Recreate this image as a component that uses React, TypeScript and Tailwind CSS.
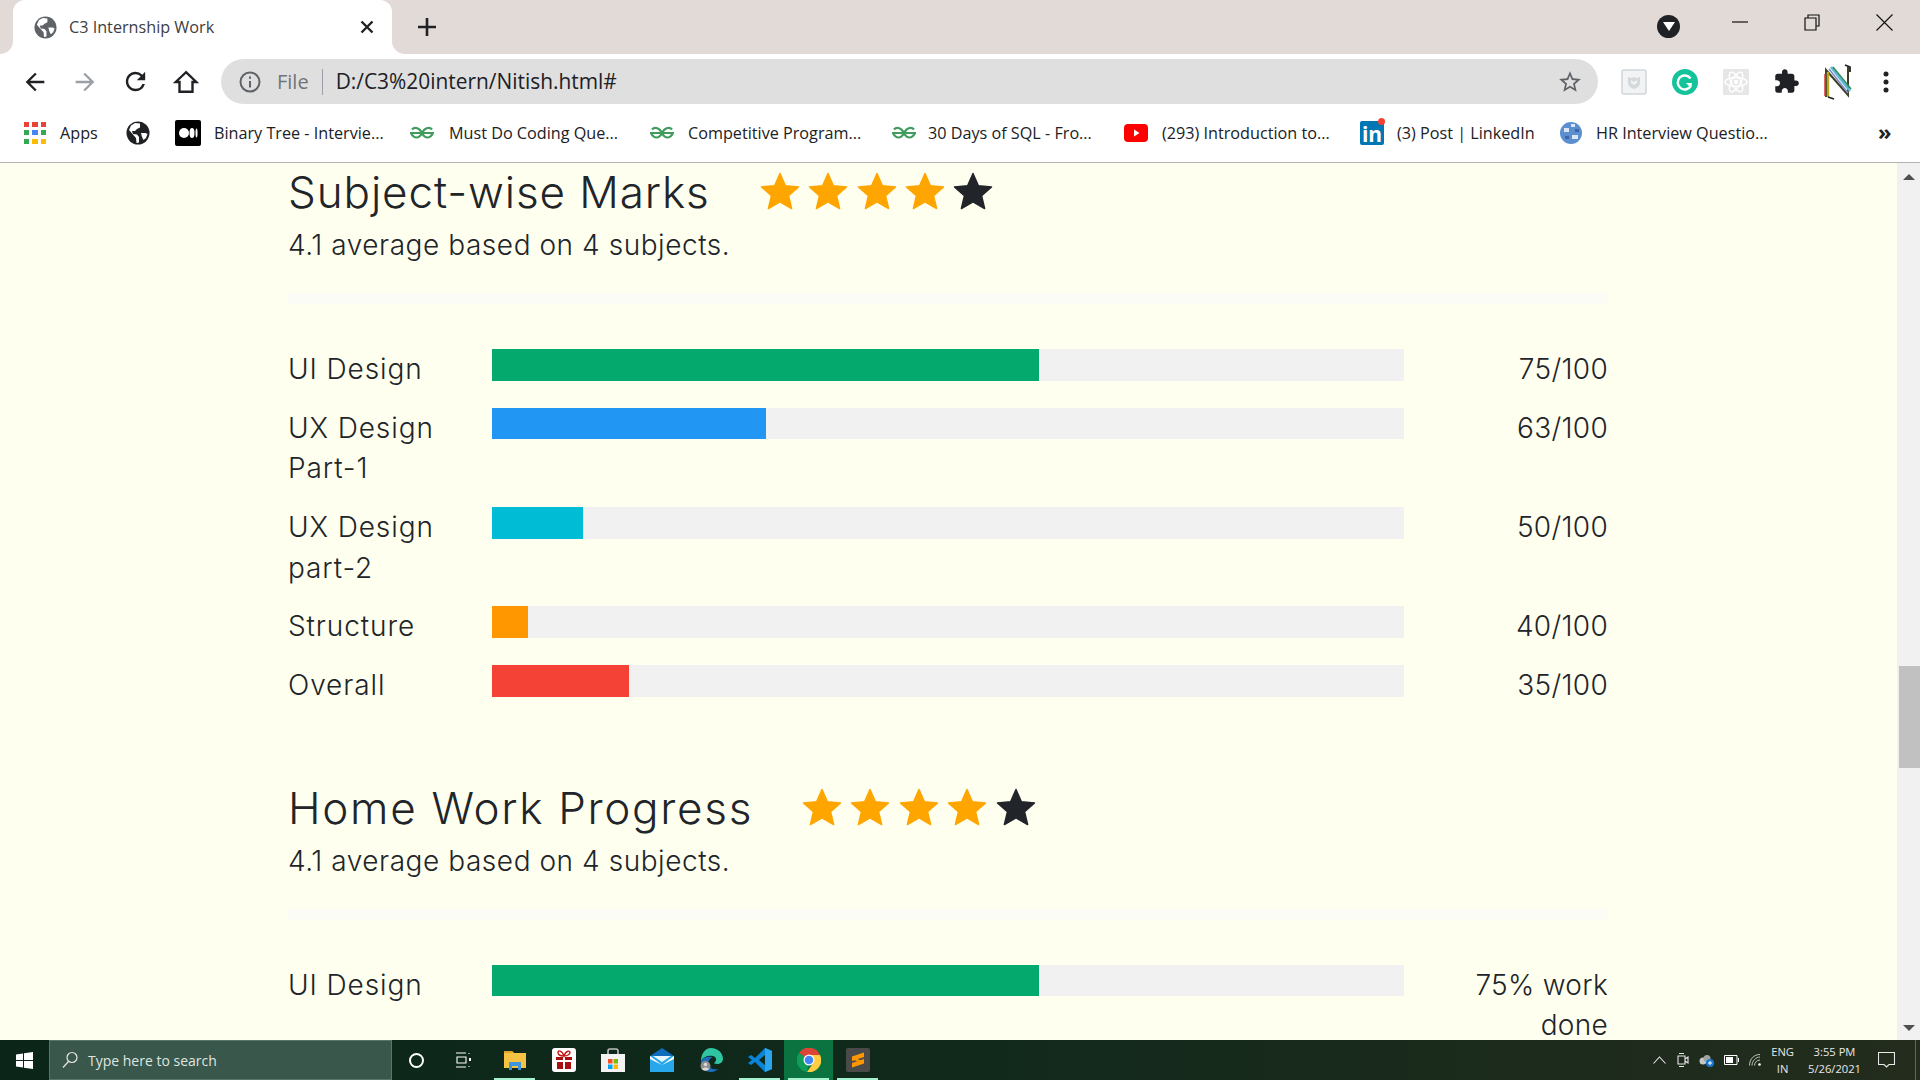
const uiFont = { fontFamily: '"Open Sans", sans-serif' };

type Row = { label: string; color: string; width: string; value: string };

const marks: Row[] = [
  { label: 'UI Design', color: 'bg-[#04aa6d]', width: 'w-[60%]', value: '75/100' },
  { label: 'UX Design Part-1', color: 'bg-[#2196f3]', width: 'w-[30%]', value: '63/100' },
  { label: 'UX Design part-2', color: 'bg-[#00bcd4]', width: 'w-[10%]', value: '50/100' },
  { label: 'Structure', color: 'bg-[#ff9800]', width: 'w-[4%]', value: '40/100' },
  { label: 'Overall', color: 'bg-[#f44336]', width: 'w-[15%]', value: '35/100' },
];

const homework: Row[] = [{ label: 'UI Design', color: 'bg-[#04aa6d]', width: 'w-[60%]', value: '75% work done' }];

const Globe = ({ size, color = '#202124' }: { size: number; color?: string }) => (
  <svg width={size} height={size} viewBox="0 0 24 24">
    <circle cx="12" cy="12" r="11.5" fill={color} />
    <path
      d="M5 4.5 3 9l7 8 .5 5 2.5-.5V16l-2-2.5-4-.5-1-3h3l2-2 3-1.5V2.5L9 2zM15 12h4.5l2 1-1.5 4-2.5 2-1.5-3z"
      fill="#fff"
    />
  </svg>
);

const Gfg = () => (
  <svg width="24" height="14" viewBox="0 0 24 14" fill="none" stroke="#3f9b5e" strokeWidth="2.2">
    <path d="M22 3.5C20 1 15 .8 12 7c3 6 8 6 11 0H1c3 6 8 6 11 0C9 .8 4 1 2 3.5" />
  </svg>
);

const Bookmark = ({ width, icon, text }: { width: string; icon: React.ReactNode; text: string }) => (
  <div className={`flex items-center shrink-0 ${width}`}>
    {icon}
    <span className="text-[16.2px] text-[#202124] whitespace-nowrap">{text}</span>
  </div>
);

const TabStrip = () => (
  <div className="flex h-[54px] shrink-0 bg-[#e2dad7] pl-[13px]" style={uiFont}>
    <div className="relative flex items-center w-[379px] bg-white rounded-t-[12px] pl-[21px]">
      <div className="absolute -left-[13px] bottom-0 w-[13px] h-[13px] bg-white">
        <div className="w-full h-full bg-[#e2dad7] rounded-br-[13px]" />
      </div>
      <div className="absolute -right-[13px] bottom-0 w-[13px] h-[13px] bg-white">
        <div className="w-full h-full bg-[#e2dad7] rounded-bl-[13px]" />
      </div>
      <Globe size={23} color="#5f6368" />
      <span className="ml-[12px] text-[16.2px] text-[#3c4043]">C3 Internship Work</span>
      <svg className="ml-auto mr-[18px]" width="14" height="14" viewBox="0 0 14 14" stroke="#202124" strokeWidth="2.4">
        <path d="M1.5 1.5l11 11M12.5 1.5l-11 11" />
      </svg>
    </div>
    <svg className="ml-[25px] self-center" width="20" height="20" viewBox="0 0 20 20" stroke="#202124" strokeWidth="2.6">
      <path d="M10 1v18M1 10h18" />
    </svg>
    <div className="ml-auto flex items-start">
      <div className="mt-[15px] mr-[52px] flex items-center justify-center w-[23px] h-[23px] rounded-full bg-[#202124]">
        <div className="w-0 h-0 border-l-[6px] border-r-[6px] border-t-[9px] border-l-transparent border-r-transparent border-t-white" />
      </div>
      <svg className="mt-[21px] mr-[56px]" width="16" height="2" viewBox="0 0 16 2">
        <path d="M0 1h16" stroke="#111" strokeWidth="1.2" />
      </svg>
      <svg className="mt-[14px] mr-[56px]" width="16" height="17" viewBox="0 0 16 17" fill="none" stroke="#111" strokeWidth="1.2">
        <path d="M4 4V1h11v11h-3M1 4h11v12H1z" />
      </svg>
      <svg className="mt-[14px] mr-[27px]" width="17" height="17" viewBox="0 0 17 17" stroke="#111" strokeWidth="1.1">
        <path d="M.5.5l16 16M16.5.5l-16 16" />
      </svg>
    </div>
  </div>
);

const ToolbarButton = ({ children }: { children: React.ReactNode }) => (
  <div className="flex items-center justify-center w-[50px] h-full shrink-0">{children}</div>
);

const ExtSlot = ({ children }: { children: React.ReactNode }) => (
  <div className="flex items-center justify-center w-[51px] h-full shrink-0">{children}</div>
);

const Toolbar = () => (
  <div className="flex h-[55px] shrink-0 bg-white pl-[10px] items-center" style={uiFont}>
    <ToolbarButton>
      <svg width="28" height="28" viewBox="0 0 24 24" fill="#202124">
        <path d="M20 11H7.83l5.59-5.59L12 4l-8 8 8 8 1.41-1.41L7.83 13H20v-2z" />
      </svg>
    </ToolbarButton>
    <ToolbarButton>
      <svg width="28" height="28" viewBox="0 0 24 24" fill="#9aa0a6">
        <path d="M4 11h12.17l-5.59-5.59L12 4l8 8-8 8-1.41-1.41L16.17 13H4v-2z" />
      </svg>
    </ToolbarButton>
    <ToolbarButton>
      <svg width="29" height="29" viewBox="0 0 24 24" fill="#202124">
        <path d="M17.65 6.35A7.958 7.958 0 0012 4c-4.42 0-7.99 3.58-7.99 8s3.57 8 7.99 8c3.73 0 6.84-2.55 7.73-6h-2.08A5.99 5.99 0 0112 18c-3.31 0-6-2.69-6-6s2.69-6 6-6c1.66 0 3.14.69 4.22 1.78L13 11h7V4l-2.35 2.35z" />
      </svg>
    </ToolbarButton>
    <ToolbarButton>
      <svg className="ml-[2px]" width="26" height="26" viewBox="0 0 24 24" fill="none" stroke="#202124" strokeWidth="2.2">
        <path d="M12 3 2.5 12H6v9h12v-9h3.5z" />
      </svg>
    </ToolbarButton>
    <div className="flex items-center ml-[11px] w-[1377px] h-[45px] shrink-0 rounded-full bg-[#dfdfdf] pl-[17px] pr-[15px]">
      <svg width="24" height="24" viewBox="0 0 24 24" fill="none" stroke="#5f6368" strokeWidth="2">
        <circle cx="12" cy="12" r="9.5" />
        <path d="M12 11v6.5M12 6.5v2.2" />
      </svg>
      <span className="ml-[15px] text-[20px] text-[#70757a]">File</span>
      <div className="ml-[13px] w-px h-[26px] bg-[#9aa0a6]" />
      <span className="ml-[13px] text-[20.9px] text-[#202124]">D:/C3%20intern/Nitish.html#</span>
      <svg className="ml-auto" width="26" height="26" viewBox="0 0 24 24" fill="#5f6368">
        <path d="M22 9.24l-7.19-.62L12 2 9.19 8.63 2 9.24l5.46 4.73L5.82 21 12 17.27 18.18 21l-1.63-7.03L22 9.24zM12 15.4l-3.76 2.27 1-4.28-3.32-2.88 4.38-.38L12 6.1l1.71 4.04 4.38.38-3.32 2.88 1 4.28L12 15.4z" />
      </svg>
    </div>
    <div className="flex h-full ml-[10px]">
      <ExtSlot>
        <svg width="26" height="26" viewBox="0 0 26 26">
          <rect x="1" y="1" width="24" height="24" rx="2" fill="#f1f3f4" stroke="#cfd6da" strokeWidth="1.5" />
          <path d="M7 8l3 1 3-1 3 1 3-1v6c0 3-3 5-6 6-3-1-6-3-6-6z" fill="#d5d9dc" />
          <path d="M10 11l3 2 3-2v3l-3 2-3-2z" fill="#f1f3f4" />
        </svg>
      </ExtSlot>
      <ExtSlot>
        <svg width="26" height="26" viewBox="0 0 26 26">
          <circle cx="13" cy="13" r="13" fill="#15c39a" />
          <path d="M18.5 9.5A7 7 0 1 0 19 16.5" fill="none" stroke="#fff" strokeWidth="2.4" />
          <path d="M14 14h6l-1 5z" fill="#fff" />
        </svg>
      </ExtSlot>
      <ExtSlot>
        <svg width="26" height="26" viewBox="0 0 26 26">
          <rect width="26" height="26" rx="1" fill="#e6e6e6" />
          <g fill="none" stroke="#fff" strokeWidth="1.4">
            <ellipse cx="13" cy="13" rx="11" ry="4.5" />
            <ellipse cx="13" cy="13" rx="11" ry="4.5" transform="rotate(60 13 13)" />
            <ellipse cx="13" cy="13" rx="11" ry="4.5" transform="rotate(120 13 13)" />
          </g>
          <circle cx="13" cy="13" r="2.2" fill="#fff" />
        </svg>
      </ExtSlot>
      <ExtSlot>
        <svg width="27" height="27" viewBox="0 0 24 24" fill="#202124">
          <path d="M20.5 11H19V7c0-1.1-.9-2-2-2h-4V3.5C13 2.12 11.88 1 10.5 1S8 2.12 8 3.5V5H4c-1.1 0-1.99.9-1.99 2v3.8H3.5c1.49 0 2.7 1.21 2.7 2.7s-1.21 2.7-2.7 2.7H2V20c0 1.1.9 2 2 2h3.8v-1.5c0-1.49 1.21-2.7 2.7-2.7 1.49 0 2.7 1.21 2.7 2.7V22H17c1.1 0 2-.9 2-2v-4h1.5c1.38 0 2.5-1.12 2.5-2.5S21.88 11 20.5 11z" />
        </svg>
      </ExtSlot>
      <ExtSlot>
        <svg width="30" height="36" viewBox="0 0 30 36" fill="none">
          <path d="M3 33V6l22 25V3" stroke="#3f3f2a" strokeWidth="2" />
          <path d="M5 33V8" stroke="#b6a81f" strokeWidth="2.5" />
          <path d="M2 32V10" stroke="#d9383a" strokeWidth="1.5" />
          <path d="M8 3l19 24" stroke="#5ab7d8" strokeWidth="2.5" />
          <path d="M6 5l19 24" stroke="#7f8ac0" strokeWidth="1.5" />
          <path d="M10 3l18 22" stroke="#2e8b57" strokeWidth="1.5" />
          <path d="M22 1l5 2v5" stroke="#222" strokeWidth="1.8" />
          <path d="M5 33l6 2" stroke="#222" strokeWidth="1.8" />
        </svg>
      </ExtSlot>
      <ExtSlot>
        <svg className="mr-[5px]" width="6" height="22" viewBox="0 0 6 22" fill="#202124">
          <circle cx="3" cy="3" r="2.5" />
          <circle cx="3" cy="11" r="2.5" />
          <circle cx="3" cy="19" r="2.5" />
        </svg>
      </ExtSlot>
    </div>
  </div>
);

const AppsIcon = () => (
  <div className="grid grid-cols-3 gap-x-[3px] gap-y-[3.5px] w-[22px] mr-[14px]">
    {['bg-[#ea4335]', 'bg-[#ea4335]', 'bg-[#ea4335]', 'bg-[#34a853]', 'bg-[#4285f4]', 'bg-[#34a853]', 'bg-[#34a853]', 'bg-[#fbbc04]', 'bg-[#fbbc04]'].map((c, i) => (
      <div key={i} className={`h-[5px] ${c}`} />
    ))}
  </div>
);

const Bookmarks = () => (
  <div className="flex h-[54px] shrink-0 items-center bg-white border-b border-[#b3b3b3] pl-[24px] pb-[5px]" style={uiFont}>
    <Bookmark width="w-[102px]" icon={<AppsIcon />} text="Apps" />
    <div className="w-[49px] shrink-0">
      <Globe size={24} />
    </div>
    <Bookmark
      width="w-[235px]"
      icon={
        <svg className="mr-[13px] shrink-0" width="26" height="26" viewBox="0 0 26 26">
          <rect width="26" height="26" rx="2" fill="#000" />
          <circle cx="9" cy="13" r="5" fill="#fff" />
          <ellipse cx="17" cy="13" rx="2.5" ry="5" fill="#fff" />
          <ellipse cx="21.5" cy="13" rx="1" ry="4.5" fill="#fff" />
        </svg>
      }
      text="Binary Tree - Intervie..."
    />
    <Bookmark width="w-[240px]" icon={<span className="mr-[15px] flex"><Gfg /></span>} text="Must Do Coding Que..." />
    <Bookmark width="w-[242px]" icon={<span className="mr-[14px] flex"><Gfg /></span>} text="Competitive Program..." />
    <Bookmark width="w-[232px]" icon={<span className="mr-[12px] flex"><Gfg /></span>} text="30 Days of SQL - Fro..." />
    <Bookmark
      width="w-[236px]"
      icon={
        <svg className="mr-[14px] shrink-0" width="24" height="18" viewBox="0 0 24 18">
          <rect width="24" height="18" rx="4" fill="#f00" />
          <path d="M10 5.5l5.5 3.5-5.5 3.5z" fill="#fff" />
        </svg>
      }
      text="(293) Introduction to..."
    />
    <Bookmark
      width="w-[200px]"
      icon={
        <span className="relative flex items-end justify-center mr-[13px] w-[24px] h-[24px] bg-[#0077b5] rounded-[2px] shrink-0">
          <span className="text-white font-bold text-[21px] leading-[22px]">in</span>
          <span className="absolute -top-[3px] -right-[1px] w-[7px] h-[7px] rounded-full bg-[#f44336]" />
        </span>
      }
      text="(3) Post | LinkedIn"
    />
    <Bookmark
      width="w-[318px]"
      icon={
        <svg className="mr-[14px] shrink-0" width="22" height="24" viewBox="0 0 22 24">
          <circle cx="11" cy="12" r="11" fill="#5b8fd0" />
          <path d="M4 7h5v4H4zM12 14h6v4h-6zM11 3h4v3h-4z" fill="#dbe7f5" />
          <path d="M5 15h4v3H5zM15 8h4v3h-4z" fill="#3f63a8" />
        </svg>
      }
      text="HR Interview Questio..."
    />
    <span className="text-[22px] leading-none font-bold text-[#202124] -mt-[4px]">»</span>
  </div>
);

const Star = ({ color }: { color: string }) => (
  <svg width="40" height="38" viewBox="0 0 40 38" fill={color} stroke={color} strokeWidth="1.5" strokeLinejoin="round">
    <path d="M20 1.5l5.4 12.3 13.1 1.1-9.9 8.900 3 12.700L20 29.800 8.400 36.500l3-12.700-9.900-8.900 13.100-1.100z" />
  </svg>
);

const Stars = ({ className }: { className: string }) => (
  <div className={`flex items-center gap-[8.4px] -mt-[2px] ${className}`}>
    <Star color="#ffa500" />
    <Star color="#ffa500" />
    <Star color="#ffa500" />
    <Star color="#ffa500" />
    <Star color="#212529" />
  </div>
);

type SectionProps = { title: string; titleClass: string; starsClass: string; rows: Row[]; topClass: string };

const Section = ({ title, titleClass, starsClass, rows, topClass }: SectionProps) => (
  <section className={topClass}>
    <div className="flex items-center h-[58px]">
      <h2 className={`text-[44px] font-light leading-[58px] whitespace-nowrap ${titleClass}`}>{title}</h2>
      <Stars className={starsClass} />
    </div>
    <p className="mt-[4px] text-[28px] font-light leading-[41px] tracking-[0.55px]">4.1 average based on 4 subjects.</p>
    <div className="mt-[27px] h-[11px] bg-[#fcfcf6]" />
    <div className="mt-[45px]">
      {rows.map((r) => (
        <div key={r.label} className="flex items-start pb-[18.25px] text-[28px] font-light leading-[40.5px]">
          <div className="w-[204px] shrink-0 pr-[40px] tracking-[0.9px]">{r.label}</div>
          <div className="w-[912px] h-[31.5px] shrink-0 bg-[#f1f1f1]">
            <div className={`h-full ${r.color} ${r.width}`} />
          </div>
          <div className="flex-1 pl-[60px] text-right tracking-[0.3px]">{r.value}</div>
        </div>
      ))}
    </div>
  </section>
);

const Scrollbar = () => (
  <div className="flex flex-col w-[23px] shrink-0 bg-[#f1f1f1] items-end">
    <div className="flex justify-center w-full pt-[11px] h-[503px]">
      <div className="w-0 h-0 border-l-[6px] border-r-[6px] border-b-[6px] border-l-transparent border-r-transparent border-b-[#505050]" />
    </div>
    <div className="w-[21px] h-[102px] bg-[#c1c1c1]" />
    <div className="flex justify-center w-full mt-auto pb-[9px]">
      <div className="w-0 h-0 border-l-[6px] border-r-[6px] border-t-[6px] border-l-transparent border-r-transparent border-t-[#505050]" />
    </div>
  </div>
);

const TaskItem = ({ children, active, running }: { children: React.ReactNode; active?: boolean; running?: boolean }) => (
  <div className={`relative flex items-center justify-center w-[49px] h-full shrink-0 ${active ? 'bg-[#0b7340]' : ''}`}>
    {children}
    {running && <div className="absolute bottom-0 left-[4px] right-[4px] h-[2px] bg-[#a6f2cf]" />}
  </div>
);

const Taskbar = () => (
  <div className="flex h-[40px] shrink-0 bg-gradient-to-r from-[#0b2619] via-[#10291b] to-[#232c1d] text-[#e8e8e8]" style={uiFont}>
    <div className="flex items-center justify-center w-[49px] shrink-0">
      <svg width="17" height="17" viewBox="0 0 17 17" fill="#fff">
        <path d="M0 2.5l7-1V8H0zM8 1.3 17 0v8H8zM0 9h7v6.5l-7-1zM8 9h9v8l-9-1.3z" />
      </svg>
    </div>
    <div className="flex items-center w-[343px] shrink-0 bg-[#39574a] border border-[#5a7569] pl-[12px]">
      <svg width="16" height="18" viewBox="0 0 16 18" fill="none" stroke="#e8e8e8" strokeWidth="1.2">
        <circle cx="10" cy="6.5" r="5" />
        <path d="M6.5 10.5 1 16.5" />
      </svg>
      <span className="ml-[10px] text-[14px] text-[#dfe5e1]">Type here to search</span>
    </div>
    <TaskItem>
      <div className="w-[15px] h-[15px] rounded-full border-[2.5px] border-white" />
    </TaskItem>
    <TaskItem>
      <svg className="mr-[4px]" width="16" height="16" viewBox="0 0 16 16" fill="none" stroke="#fff" strokeWidth="1.1">
        <path d="M0 1h10M0 15h10M1 5h9v6H1zM13 1v1M13 14v1" />
        <rect x="13" y="6" width="2" height="3" fill="#fff" stroke="none" />
      </svg>
    </TaskItem>
    <TaskItem running>
      <svg width="22" height="20" viewBox="0 0 22 20">
        <path d="M0 1h8l2 2h12v15H0z" fill="#f5c344" />
        <path d="M0 1h8l2 2H0z" fill="#e2a52b" />
        <path d="M5 20v-8h12v8h-3v-4H8v4z" fill="#3a96dd" />
      </svg>
    </TaskItem>
    <TaskItem>
      <svg width="24" height="24" viewBox="0 0 24 24">
        <rect width="24" height="24" rx="3" fill="#fff" />
        <path d="M4 9h16v3H4zM5 13h14v8H5z" fill="#a80f0f" />
        <path d="M11 9h2v12h-2z" fill="#fff" />
        <path d="M5 13h14v1H5z" fill="#fff" />
        <path d="M12 8C9 8 6 7 6 4.5S10 2 12 8c2-6 6-5.5 6-3.5S15 8 12 8z" fill="none" stroke="#c51616" strokeWidth="1.4" />
      </svg>
    </TaskItem>
    <TaskItem>
      <svg width="24" height="24" viewBox="0 0 24 24">
        <path d="M0 6h24v18H0z" fill="#f3f3f3" />
        <path d="M7 6V3a2 2 0 0 1 2-2h6a2 2 0 0 1 2 2v3" fill="none" stroke="#bfbfbf" strokeWidth="1.6" />
        <rect x="7" y="11" width="4.5" height="4.5" fill="#f25022" />
        <rect x="12.5" y="11" width="4.5" height="4.5" fill="#7fba00" />
        <rect x="7" y="16.5" width="4.5" height="4.5" fill="#00a4ef" />
        <rect x="12.5" y="16.5" width="4.5" height="4.5" fill="#ffb900" />
      </svg>
    </TaskItem>
    <TaskItem>
      <svg width="24" height="24" viewBox="0 0 24 24">
        <path d="M0 8 12 0l12 8v16H0z" fill="#0f6cbd" />
        <path d="M0 8h24v16H0z" fill="#28a8ea" />
        <path d="M0 8l12 9 12-9v3l-12 6-12-6z" fill="#fff" />
        <path d="M3 8h18l-9 6z" fill="#e8f6fd" />
      </svg>
    </TaskItem>
    <TaskItem>
      <svg width="24" height="24" viewBox="0 0 24 24">
        <path d="M12 0c7 0 12 5 12 11 0 3-3 5-6 5-2 0-3-1-3-1 3-2 3-6-1-7C9 7 4 9 2 13 2 6 6 0 12 0z" fill="#2fc5a1" />
        <path d="M2 13c-1 6 4 11 10 11 3 0 6-2 7-3-5 1-9-1-10-5 0-3 2-6 5-7-4-1-10 0-12 4z" fill="#1a6fc0" />
        <circle cx="6.5" cy="18" r="5" fill="#8e8e8e" />
        <circle cx="6.5" cy="16.5" r="1.8" fill="#d8d8d8" />
        <path d="M3 21c1-2 6-2 7 0-2 2-5 2-7 0z" fill="#d8d8d8" />
      </svg>
    </TaskItem>
    <TaskItem running>
      <svg width="24" height="24" viewBox="0 0 24 24">
        <path d="M17 0l7 3v18l-7 3-10-10-4 3-3-2 4-3-4-3 3-2 4 3zM17 7l-6 5 6 5z" fill="#0a84d6" />
        <path d="M17 0l7 3v18l-7 3z" fill="#2aa5ee" />
      </svg>
    </TaskItem>
    <TaskItem active running>
      <svg width="24" height="24" viewBox="0 0 24 24">
        <path d="M12 12 2 5A12 12 0 0 1 23 7H12z" fill="#db4437" />
        <path d="M12 12 2 5a12 12 0 0 0 8 19z" fill="#0f9d58" />
        <path d="M12 7h11a12 12 0 0 1-13 17l7-10z" fill="#ffcd40" />
        <circle cx="12" cy="12" r="5.5" fill="#fff" />
        <circle cx="12" cy="12" r="4.3" fill="#4285f4" />
      </svg>
    </TaskItem>
    <TaskItem running>
      <svg width="24" height="24" viewBox="0 0 24 24">
        <rect width="24" height="24" rx="2" fill="#4a4a4a" />
        <path d="M6 8.5 18 4.5V9L6 13zM6 15l12-4v4.5l-12 4zM6 9.5l12 3.8v2L6 11.500z" fill="#ff9800" />
      </svg>
    </TaskItem>
    <div className="relative flex-1 flex items-center text-[11.2px] leading-[17px]">
      {/* system tray */}
      <div className="ml-auto flex items-center">
        <svg className="mr-[11px]" width="13" height="8" viewBox="0 0 13 8" fill="none" stroke="#e8e8e8" strokeWidth="1.1">
          <path d="M.5 7.5 6.5 1l6 6.5" />
        </svg>
        <svg className="mr-[10px]" width="12" height="14" viewBox="0 0 12 14" fill="none" stroke="#e8e8e8" strokeWidth="1.1">
          <path d="M1 3h7v8H1zM8 6l3-2v6L8 8M2 .5h5M2 13.5h5" />
        </svg>
        <svg className="mr-[10px]" width="15" height="13" viewBox="0 0 15 13">
          <circle cx="4" cy="7" r="3.5" fill="#c4c7c5" />
          <circle cx="8" cy="4.5" r="3.5" fill="#9fa4a2" />
          <circle cx="11" cy="9" r="4" fill="#1a78d2" />
          <path d="M9 9h4M11 7v4" stroke="#fff" />
        </svg>
        <svg className="mr-[10px]" width="15" height="10" viewBox="0 0 15 10" fill="none" stroke="#fff">
          <path d="M.5.5h12.5v9H.5zM14.5 3v4" />
          <rect x="2" y="2" width="7" height="6" fill="#fff" stroke="none" />
        </svg>
        <svg className="mr-[10px]" width="12" height="12" viewBox="0 0 12 12" fill="none" stroke="#bfc4c1" strokeWidth="1">
          <path d="M.5 11.5C.5 5 5 .5 11 .5M3 11.5C3 7 7 3 11 3M5.5 11.5C5.5 8.5 8 6 11 6" />
          <circle cx="10.5" cy="10.5" r="1.3" fill="#fff" stroke="none" />
        </svg>
        <div className="flex flex-col items-center mr-[14px]">
          <span>ENG</span>
          <span>IN</span>
        </div>
        <div className="flex flex-col items-center mr-[17px]">
          <span>3:55 PM</span>
          <span>5/26/2021</span>
        </div>
        <svg className="mr-[20px]" width="17" height="16" viewBox="0 0 17 16" fill="none" stroke="#e8e8e8" strokeWidth="1.1">
          <path d="M.5.5h16v12h-5.5L8.5 15 6 12.5H.5z" />
        </svg>
        <div className="w-px h-[40px] bg-[#5b6a5f] mr-[4px]" />
      </div>
    </div>
  </div>
);

export default function App() {
  return (
    <div className="flex flex-col w-[1920px] h-[1080px] overflow-hidden">
      <TabStrip />
      <Toolbar />
      <Bookmarks />
      <div className="flex flex-1 min-h-0 bg-[#ffffef]">
        <main className="flex-1 min-w-0 overflow-hidden pl-[288px] text-[#212529]" style={{ fontFamily: 'Inter, sans-serif' }}>
          <div className="w-[1320px]">
            <Section title="Subject-wise Marks" titleClass="tracking-[0.9px]" starsClass="ml-[50px]" rows={marks} topClass="" />
            <Section title="Home Work Progress" titleClass="tracking-[1.7px]" starsClass="ml-[49px]" rows={homework} topClass="mt-[55px]" />
          </div>
        </main>
        <Scrollbar />
      </div>
      <Taskbar />
    </div>
  );
}
